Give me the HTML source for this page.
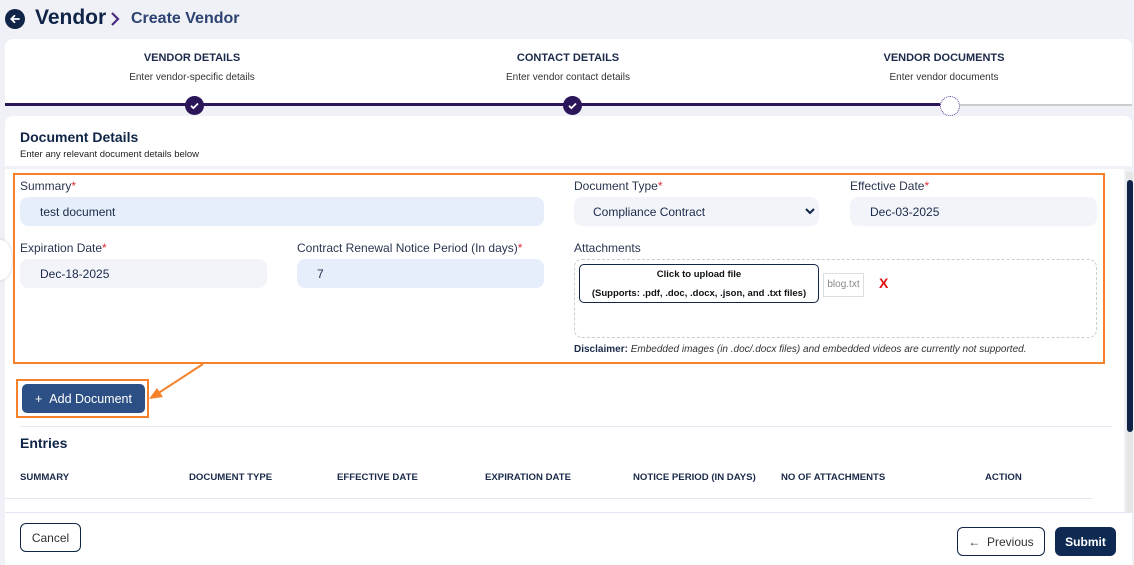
<!DOCTYPE html>
<html><head><style>
*{box-sizing:border-box;margin:0;padding:0}
body{width:1134px;height:565px;overflow:hidden;background:#f0f1f7;font-family:"Liberation Sans",sans-serif;position:relative;color:#1b2a4a}
.a{position:absolute}
.lbl{font-size:12px;color:#2a3550}
.req{color:#e0303a}
.inp{border-radius:8px;font-size:12px;color:#1b2a4a;padding-left:20px;display:flex;align-items:center}
.th{font-size:9.6px;font-weight:bold;color:#1b2a4a;top:472px}
</style></head><body>
<div class="a" style="left:5px;top:9px;width:20px;height:20px;border-radius:50%;background:#0f2447"></div>
<svg class="a" style="left:5px;top:9px" width="20" height="20"><path d="M14 10H6.5M9.5 6.8L6.3 10l3.2 3.2" stroke="#fff" stroke-width="1.8" fill="none" stroke-linecap="round"/></svg>
<div class="a" style="left:35px;top:6px;font-size:21px;font-weight:bold;color:#0f2447">Vendor</div>
<svg class="a" style="left:109px;top:11px" width="12" height="16"><path d="M3 2l6 6-6 6" stroke="#4a2a80" stroke-width="2.2" fill="none"/></svg>
<div class="a" style="left:131px;top:10px;font-size:16px;font-weight:bold;color:#2c4270">Create Vendor</div>

<div class="a" style="left:5px;top:39px;width:1127px;height:66px;background:#fff;border-radius:8px 8px 0 0"></div>
<div class="a" style="left:92px;top:52px;width:200px;text-align:center;font-size:11px;font-weight:bold">VENDOR DETAILS</div>
<div class="a" style="left:92px;top:72px;width:200px;text-align:center;font-size:10px;color:#333">Enter vendor-specific details</div>
<div class="a" style="left:468px;top:52px;width:200px;text-align:center;font-size:11px;font-weight:bold">CONTACT DETAILS</div>
<div class="a" style="left:468px;top:72px;width:200px;text-align:center;font-size:10px;color:#333">Enter vendor contact details</div>
<div class="a" style="left:844px;top:52px;width:200px;text-align:center;font-size:11px;font-weight:bold">VENDOR DOCUMENTS</div>
<div class="a" style="left:844px;top:72px;width:200px;text-align:center;font-size:10px;color:#333">Enter vendor documents</div>
<div class="a" style="left:5px;top:103px;width:945px;height:3px;background:#2a1658"></div>
<div class="a" style="left:950px;top:104px;width:182px;height:2px;background:#ccc"></div>
<div class="a" style="left:185px;top:96px;width:19px;height:19px;border-radius:50%;background:#2a1658"></div>
<div class="a" style="left:563px;top:96px;width:19px;height:19px;border-radius:50%;background:#2a1658"></div>
<svg class="a" style="left:185px;top:96px" width="19" height="19"><path d="M6 9.8l2.4 2.3L13 7.5" stroke="#fff" stroke-width="1.8" fill="none"/></svg>
<svg class="a" style="left:563px;top:96px" width="19" height="19"><path d="M6 9.8l2.4 2.3L13 7.5" stroke="#fff" stroke-width="1.8" fill="none"/></svg>
<div class="a" style="left:940px;top:96px;width:20px;height:20px;border-radius:50%;background:#fff;border:1.5px dotted #5a3a9a"></div>

<div class="a" style="left:5px;top:116px;width:1127px;height:50px;background:#fff;border-radius:8px 8px 0 0"></div>
<div class="a" style="left:20px;top:129px;font-size:14px;font-weight:bold;color:#0f2447">Document Details</div>
<div class="a" style="left:20px;top:149px;font-size:9.5px;color:#222">Enter any relevant document details below</div>

<div class="a" style="left:5px;top:169px;width:1119px;height:344px;background:#fff"></div>
<div class="a" style="left:-10px;top:240px;width:22px;height:40px;border-radius:50%;background:#fff;box-shadow:0 0 3px rgba(0,0,0,.2)"></div>
<div class="a" style="left:1126px;top:172px;width:7px;height:340px;background:#e6e6e6"></div>
<div class="a" style="left:1127px;top:180px;width:6px;height:252px;background:#0f2447;border-radius:3px"></div>

<div class="a" style="left:13px;top:173px;width:1092px;height:191px;border:2px solid #f5812a"></div>
<div class="a lbl" style="left:20px;top:179px">Summary<span class="req">*</span></div>
<div class="a inp" style="left:20px;top:197px;width:524px;height:29px;background:#e6eefb">test document</div>
<div class="a lbl" style="left:574px;top:179px">Document Type<span class="req">*</span></div>
<div class="a inp" style="left:574px;top:197px;width:245px;height:29px;background:#f2f4fa;padding-left:19px">Compliance Contract</div>
<svg class="a" style="left:804px;top:206px" width="12" height="10"><path d="M2 3l4 4 4-4" stroke="#0f2447" stroke-width="2" fill="none"/></svg>
<div class="a lbl" style="left:850px;top:179px">Effective Date<span class="req">*</span></div>
<div class="a inp" style="left:850px;top:197px;width:247px;height:29px;background:#f2f4fa">Dec-03-2025</div>
<div class="a lbl" style="left:20px;top:241px">Expiration Date<span class="req">*</span></div>
<div class="a inp" style="left:20px;top:259px;width:247px;height:29px;background:#f2f4fa">Dec-18-2025</div>
<div class="a lbl" style="left:297px;top:241px">Contract Renewal Notice Period (In days)<span class="req">*</span></div>
<div class="a inp" style="left:297px;top:259px;width:247px;height:29px;background:#e6eefb">7</div>
<div class="a lbl" style="left:574px;top:241px">Attachments</div>
<div class="a" style="left:574px;top:259px;width:523px;height:79px;border:1px dashed #ccc;border-radius:8px"></div>
<div class="a" style="left:579px;top:264px;width:240px;height:39px;border:1.5px solid #0f2447;border-radius:5px;text-align:center;font-size:9.5px;font-weight:bold;color:#111;line-height:19px;padding-top:0px">Click to upload file<br>(Supports: .pdf, .doc, .docx, .json, and .txt files)</div>
<div class="a" style="left:823px;top:273px;width:41px;height:24px;border:1px solid #ddd;font-size:10px;color:#888;text-align:center;line-height:22px">blog.txt</div>
<div class="a" style="left:879px;top:275px;font-size:14px;font-weight:bold;color:#e01010">X</div>
<div class="a" style="left:574px;top:344px;font-size:10px;color:#333"><b style="color:#1b2a4a">Disclaimer:</b> <i>Embedded images (in .doc/.docx files) and embedded videos are currently not supported.</i></div>

<svg class="a" style="left:140px;top:360px" width="70" height="45"><path d="M63 4L17 34" stroke="#f5812a" stroke-width="2"/><path d="M9 39l14-2-6-9z" fill="#f5812a"/></svg>
<div class="a" style="left:16px;top:379px;width:133px;height:39px;border:2px solid #f5812a"></div>
<div class="a" style="left:22px;top:384px;width:123px;height:29px;background:#2c5085;border-radius:5px;color:#fff;font-size:12.5px;display:flex;align-items:center;justify-content:center">+&nbsp;&nbsp;Add Document</div>

<div class="a" style="left:20px;top:426px;width:1092px;height:1px;background:#e8e8f4"></div>
<div class="a" style="left:20px;top:435px;font-size:14px;font-weight:bold;color:#0f2447">Entries</div>
<div class="a th" style="left:20px">SUMMARY</div>
<div class="a th" style="left:189px">DOCUMENT TYPE</div>
<div class="a th" style="left:337px">EFFECTIVE DATE</div>
<div class="a th" style="left:485px">EXPIRATION DATE</div>
<div class="a th" style="left:633px">NOTICE PERIOD (IN DAYS)</div>
<div class="a th" style="left:781px">NO OF ATTACHMENTS</div>
<div class="a th" style="left:985px">ACTION</div>
<div class="a" style="left:5px;top:498px;width:1087px;height:1px;background:#e4e4f2"></div>

<div class="a" style="left:5px;top:512px;width:1127px;height:53px;background:#fff;border-top:1px solid #e4e4f2"></div>
<div class="a" style="left:20px;top:523px;width:61px;height:29px;border:1px solid #0f2447;border-radius:6px;font-size:12px;color:#333;display:flex;align-items:center;justify-content:center">Cancel</div>
<div class="a" style="left:957px;top:527px;width:88px;height:29px;border:1px solid #0f2447;border-radius:6px;font-size:12px;color:#333;display:flex;align-items:center;justify-content:center">←&nbsp;&nbsp;Previous</div>
<div class="a" style="left:1055px;top:527px;width:61px;height:29px;background:#0f2a52;border-radius:6px;font-size:12px;font-weight:bold;color:#fff;display:flex;align-items:center;justify-content:center">Submit</div>
</body></html>
